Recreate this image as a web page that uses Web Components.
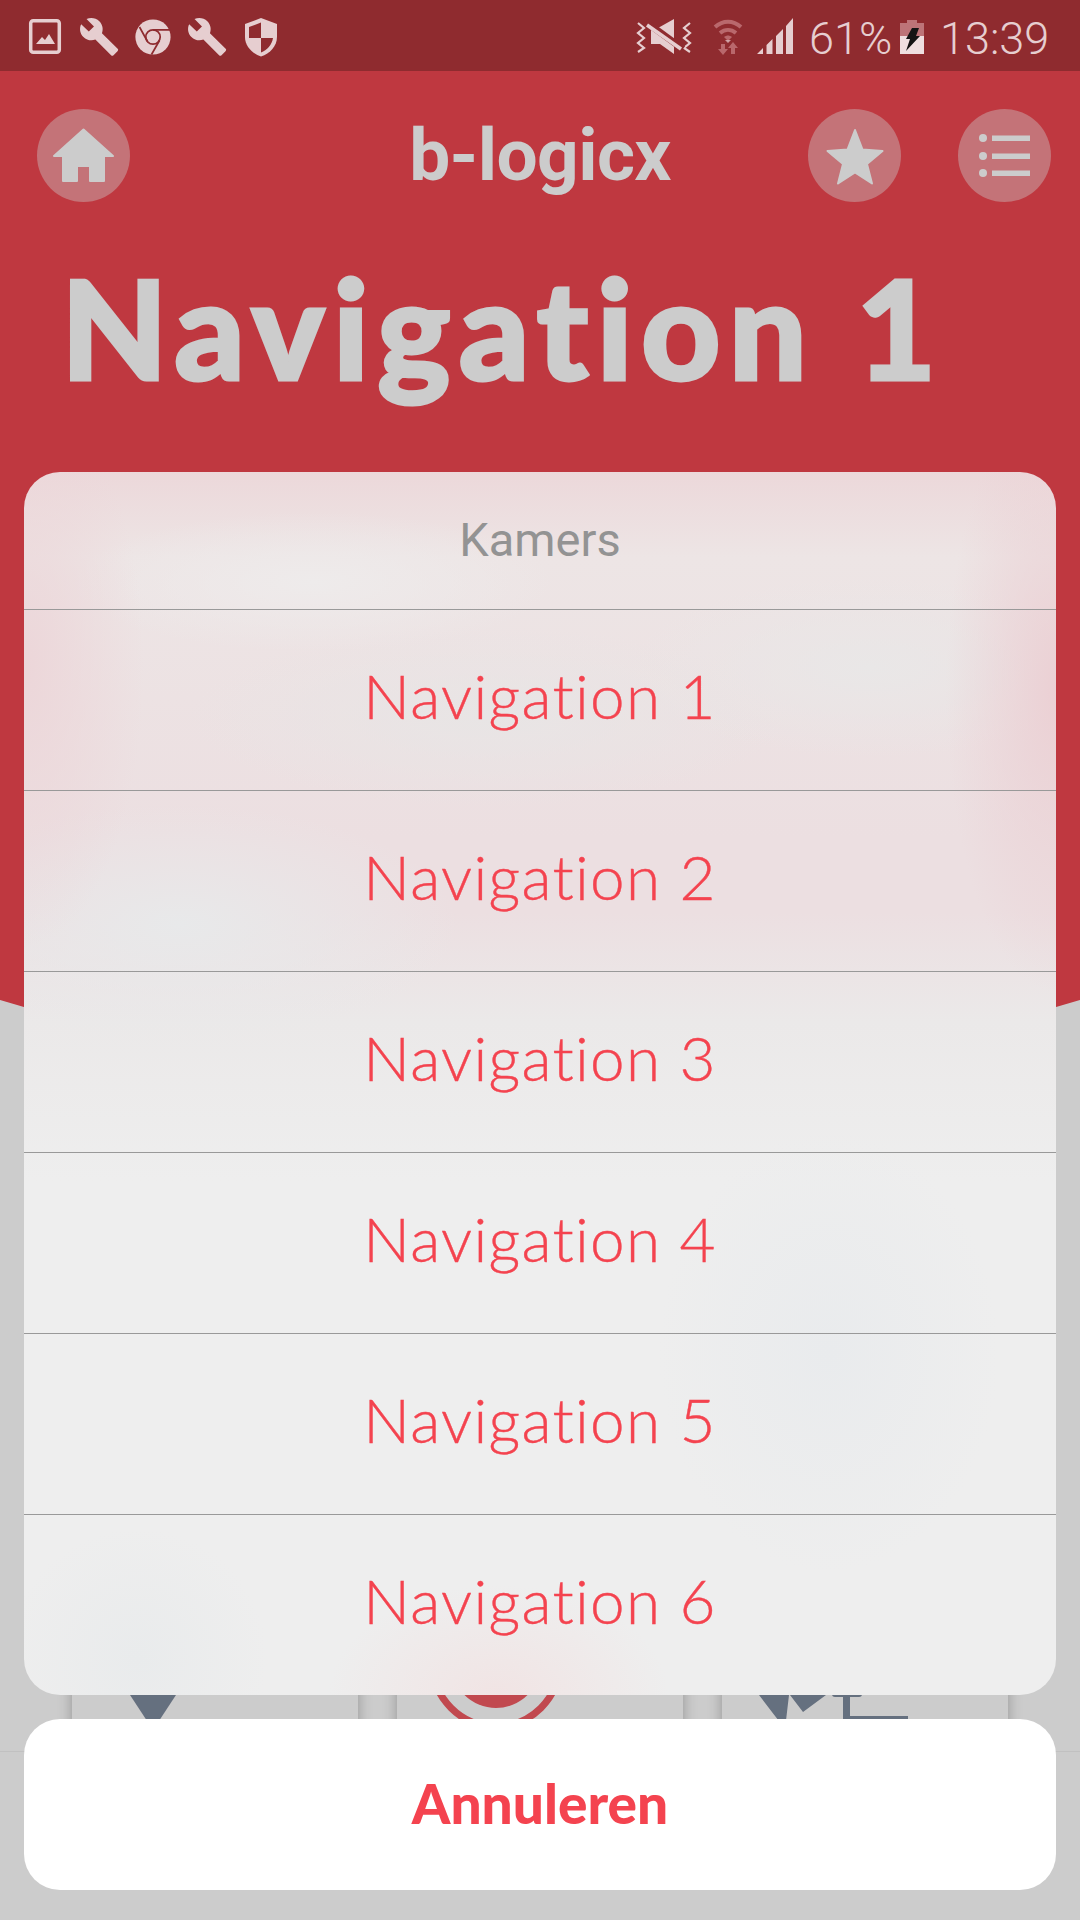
<!DOCTYPE html>
<html>
<head>
<meta charset="utf-8">
<title>b-logicx</title>
<style>
  html, body { margin: 0; padding: 0; }
  body { width: 1080px; height: 1920px; overflow: hidden; font-family: Roboto, sans-serif; }
</style>
</head>
<body>
<app-screen>
  <status-bar></status-bar>
  <hero-header title="Navigation 1" brand="b-logicx"></hero-header>
  <tile-row></tile-row>
  <tab-bar></tab-bar>
  <action-sheet slot="modal" heading="Kamers" cancel="Annuleren">
    <sheet-item>Navigation 1</sheet-item>
    <sheet-item>Navigation 2</sheet-item>
    <sheet-item>Navigation 3</sheet-item>
    <sheet-item>Navigation 4</sheet-item>
    <sheet-item>Navigation 5</sheet-item>
    <sheet-item>Navigation 6</sheet-item>
  </action-sheet>
</app-screen>

<script>
const WRENCH = "M22.7 19l-9.1-9.1c.9-2.3.4-5-1.5-6.9-2-2-5-2.4-7.4-1.3L9 6 6 9 1.6 4.7C.4 7.1.9 10.1 2.9 12.1c1.9 1.9 4.6 2.4 6.9 1.5l9.1 9.1c.4.4 1 .4 1.4 0l2.3-2.3c.5-.4.5-1.1.1-1.4z";

class AppScreen extends HTMLElement {
  constructor() {
    super();
    this.attachShadow({ mode: "open" });
    this.shadowRoot.innerHTML = `
      <style>
        :host {
          display: flex;
          flex-direction: column;
          position: relative;
          width: 1080px;
          height: 1920px;
          background: #fff;
          overflow: hidden;
        }
        .dim {
          position: absolute;
          inset: 71px 0 0 0;
          background: rgba(0, 0, 0, 0.2);
        }
      </style>
      <slot></slot>
      <div class="dim"></div>
      <slot name="modal"></slot>
    `;
  }
}

class StatusBar extends HTMLElement {
  constructor() {
    super();
    this.attachShadow({ mode: "open" });
    this.shadowRoot.innerHTML = `
      <style>
        :host {
          display: block;
          position: relative;
          z-index: 2;
          height: 71px;
          flex: none;
          background: #8f2b2f;
          color: #e6ced0;
          font: 300 45px Roboto, sans-serif;
        }
        svg { position: absolute; left: 0; top: 0; }
        span { position: absolute; top: 12px; line-height: 53px; white-space: nowrap; }
        .pct { left: 809px; }
        .time { left: 940px; }
      </style>
      <svg width="1080" height="71" viewBox="0 0 1080 71" fill="#e6ced0">
        <!-- picture notification -->
        <rect x="30.7" y="20.7" width="28.6" height="31.6" rx="2.5" fill="none" stroke="#e6ced0" stroke-width="3.5"/>
        <path d="M36 44l6-7 3 3 4-6 6 10z"/>
        <!-- wrench -->
        <path transform="translate(78.400 16) scale(1.73)" d="${WRENCH}"/>
        <!-- chrome -->
        <circle cx="153" cy="37" r="17.6"/>
        <g fill="none" stroke="#8f2b2f" stroke-width="1.7">
          <circle cx="153" cy="37" r="7.2"/>
          <path d="M139.5 27l8 14.5M153 29.8h17.5M151.5 54.5l8-14"/>
        </g>
        <!-- wrench -->
        <path transform="translate(186.400 16) scale(1.73)" d="${WRENCH}"/>
        <!-- shield -->
        <path d="M261 18l16 6v13c0 9-7 16.500-16 19.500c-9-3-16-10.500-16-19.500V24z"/>
        <path fill="#8f2b2f" d="M261 22.500l-12 4.500v11h12zM261 38h12c-1 7-6 12-12 14.500z"/>
        <!-- vibrate / muted -->
        <g fill="none" stroke="#e6ced0" stroke-width="2.2">
          <path d="M638 23l6 5-6 5 6 5-6 5 6 5-6 4M690 23l-6 5 6 5-6 5 6 5-6 5 6 4"/>
        </g>
        <path d="M651 28h7l16-9v35l-14-10h-9z"/>
        <path d="M645 23l37 27" stroke="#8f2b2f" stroke-width="7" transform="translate(1 -1)"/>
        <path d="M647 25l34 24" stroke="#e6ced0" stroke-width="3.6"/>
        <!-- wifi -->
        <g fill="none" stroke="#b9686c" stroke-width="4">
          <path d="M715 27c8-7 18-7 26 0"/>
          <path d="M720 33c5-4 11-4 16 0"/>
        </g>
        <path fill="#b9686c" d="M724 37c3-2 5-2 8 0l-4 4z"/>
        <path fill="#e6ced0" d="M725 40h6l-3 3z" opacity=".7"/>
        <path fill="#b9686c" d="M721 44h4v5h3l-5 6-5-6h3zM733 42l5 6h-3v6h-4v-6h-3z"/>
        <!-- signal -->
        <path d="M757 54l6-6v6zM766.500 45l6-6v15h-6zM776 36l7-7v25h-7zM786 26l7-8v36h-7z"/>
        <!-- battery -->
        <path fill="#bd7478" d="M907 20h10v3h7v13h-24V23h7z"/>
        <path fill="#efdfe0" d="M900 36h24v18h-24z"/>
        <path fill="#141414" d="M912 28h7l-3 8h4l-14 15 4-12h-4z"/>
      </svg>
      <span class="pct">61%</span>
      <span class="time">13:39</span>
    `;
  }
}

class RoundButton extends HTMLElement {
  constructor() {
    super();
    this.attachShadow({ mode: "open" });
    this.shadowRoot.innerHTML = `
      <style>
        :host {
          display: flex;
          align-items: center;
          justify-content: center;
          flex: none;
          width: 93px;
          height: 93px;
          border-radius: 50%;
          background: rgba(255, 255, 255, 0.4);
        }
        ::slotted(svg) { display: block; }
      </style>
      <slot></slot>
    `;
  }
}

class HeroHeader extends HTMLElement {
  constructor() {
    super();
    this.attachShadow({ mode: "open" });
    this.shadowRoot.innerHTML = `
      <style>
        :host {
          display: block;
          flex: none;
          height: 1009px;
          background: #ef4650;
          color: #fff;
          clip-path: circle(1860px at 540px -851px);
        }
        nav {
          display: grid;
          grid-template-columns: 1fr auto 1fr;
          align-items: center;
          padding: 38px 33px 0;
        }
        .left { margin-left: 4px; }
        .right { display: flex; justify-content: flex-end; gap: 57px; margin-right: -4px; }
        .brand {
          font: 700 73px/93px Roboto, sans-serif;
          letter-spacing: -0.6px;
        }
        h1 {
          margin: 45px 0 0 61px;
          font: 900 138px/160px Lato, sans-serif;
          font-variant-ligatures: none;
          letter-spacing: 8.2px;
          -webkit-text-stroke: 3px #fff;
          white-space: nowrap;
        }
      </style>
      <nav>
        <div class="left">
          <round-button>
            <svg width="62" height="56" viewBox="0 0 62 56" fill="#fff" stroke="#fff" stroke-width="2" stroke-linejoin="round">
              <path d="M30.500 1.500L60 28H51V53H37V38H24V53H10V28H1z"/>
            </svg>
          </round-button>
        </div>
        <div class="brand"></div>
        <div class="right">
          <round-button>
            <svg width="60" height="58" viewBox="0 0 60 58" fill="#fff" stroke="#fff" stroke-width="2" stroke-linejoin="round">
              <path d="M30 3l7.500 19.500 20 1.500-15.500 13 5 19.500L30 45.500 13 56.500 18 37 2.500 24l20-1.500z"/>
            </svg>
          </round-button>
          <round-button>
            <svg width="52" height="46" viewBox="0 0 52 46" fill="#fff">
              <circle cx="4" cy="5" r="4"/><circle cx="4" cy="23" r="4"/><circle cx="4" cy="40" r="4"/>
              <rect x="13" y="2.500" width="38" height="5.500"/><rect x="13" y="20.500" width="38" height="5.500"/><rect x="13" y="37.500" width="38" height="5.500"/>
            </svg>
          </round-button>
        </div>
      </nav>
      <h1></h1>
    `;
  }

  connectedCallback() {
    this.shadowRoot.querySelector(".brand").textContent = this.getAttribute("brand");
    this.shadowRoot.querySelector("h1").textContent = this.getAttribute("title");
  }
}

class TileRow extends HTMLElement {
  constructor() {
    super();
    this.attachShadow({ mode: "open" });
    this.shadowRoot.innerHTML = `
      <style>
        :host {
          display: flex;
          flex: 1;
          align-items: flex-end;
          justify-content: space-between;
          padding: 0 72px 0;
        }
        .tile {
          width: 286px;
          height: 190px;
          background: #fff;
          box-shadow: 0 0 13px rgba(0, 0, 0, 0.28);
        }
        svg { display: block; }
      </style>
      <div class="tile">
        <svg width="286" height="190" viewBox="0 0 286 190" fill="#7f8c9f">
          <path d="M58 145h46l-23 35z"/>
        </svg>
      </div>
      <div class="tile">
        <svg width="286" height="190" viewBox="0 0 286 190" fill="none">
          <circle cx="99" cy="113" r="63.500" stroke="#f25c63" stroke-width="7"/>
          <circle cx="99" cy="113" r="45" fill="#f25c63"/>
        </svg>
      </div>
      <div class="tile">
        <svg width="286" height="190" viewBox="0 0 286 190" fill="#7f8c9f">
          <path d="M37 145h30l-4 34zM68 145h36l-23 17z"/>
          <rect x="110" y="141" width="30" height="6" rx="3"/>
          <path d="M121 145h7v21h58v3h-65z"/>
        </svg>
      </div>
    `;
  }
}

class TabBar extends HTMLElement {
  constructor() {
    super();
    this.attachShadow({ mode: "open" });
    this.shadowRoot.innerHTML = `
      <style>
        :host {
          display: block;
          flex: none;
          height: 168px;
          border-top: 1px solid #f2f2f2;
          margin-top: 11px;
          background: #fff;
        }
      </style>
    `;
  }
}

class ActionSheet extends HTMLElement {
  constructor() {
    super();
    this.attachShadow({ mode: "open" });
    this.shadowRoot.innerHTML = `
      <style>
        :host {
          display: flex;
          flex-direction: column;
          gap: 24px;
          position: absolute;
          left: 24px;
          right: 24px;
          bottom: 30px;
          z-index: 3;
        }
        .group {
          border-radius: 36px;
          overflow: hidden;
          background:
            radial-gradient(130px 130px at 11% 97%, #e9ebec, rgba(233,235,236,0) 100%),
            radial-gradient(170px 110px at 46% 100%, #f1e4e4, rgba(241,228,228,0) 100%),
            radial-gradient(170px 220px at 78% 72%, #e9ebed, rgba(233,235,237,0) 100%),
            radial-gradient(120px 280px at 0% 16%, #ecd6d9, rgba(236,214,217,0) 100%),
            radial-gradient(110px 300px at 100% 18%, #ebd0d4, rgba(235,208,212,0) 100%),
            radial-gradient(280px 120px at 15% 37%, #e8e9ea, rgba(232,233,234,0) 100%),
            radial-gradient(300px 90px at 45% 20%, #e8e5e5, rgba(232,229,229,0) 100%),
            radial-gradient(240px 70px at 28% 9%, #eeebeb, rgba(238,235,235,0) 100%),
            radial-gradient(240px 90px at 82% 16%, #e9e7e7, rgba(233,231,231,0) 100%),
            linear-gradient(to bottom, #ecd8da 0, #ede5e5 7%, #ecdfe1 30%, #ecdfe1 36%, #ebe9e9 45%, #eeeeee 58%, #eeeeee 100%);
        }
        .head {
          height: 137px;
          display: flex;
          align-items: center;
          justify-content: center;
          color: #939393;
          font: 400 47px Roboto, sans-serif;
          padding-bottom: 3px;
          box-sizing: border-box;
        }
        .cancel {
          height: 171px;
          border-radius: 36px;
          background: #fff;
          display: flex;
          align-items: center;
          justify-content: center;
          color: #f4434f;
          font: 900 55px Lato, sans-serif;
          padding-bottom: 4px;
          box-sizing: border-box;
        }
      </style>
      <div class="group">
        <div class="head"></div>
        <slot></slot>
      </div>
      <div class="cancel"></div>
    `;
  }

  connectedCallback() {
    this.shadowRoot.querySelector(".head").textContent = this.getAttribute("heading");
    this.shadowRoot.querySelector(".cancel").textContent = this.getAttribute("cancel");
  }
}

class SheetItem extends HTMLElement {
  constructor() {
    super();
    this.attachShadow({ mode: "open" });
    this.shadowRoot.innerHTML = `
      <style>
        :host {
          display: flex;
          align-items: center;
          justify-content: center;
          box-sizing: border-box;
          height: 181px;
          padding-bottom: 10px;
          border-top: 1px solid #999;
          color: #f4434f;
          font: 300 62px Lato, sans-serif;
          font-variant-ligatures: none;
          letter-spacing: 1.3px;
          -webkit-text-stroke: 0.4px #f4434f;
        }
      </style>
      <slot></slot>
    `;
  }
}

customElements.define("app-screen", AppScreen);
customElements.define("status-bar", StatusBar);
customElements.define("round-button", RoundButton);
customElements.define("hero-header", HeroHeader);
customElements.define("tile-row", TileRow);
customElements.define("tab-bar", TabBar);
customElements.define("action-sheet", ActionSheet);
customElements.define("sheet-item", SheetItem);
</script>
</body>
</html>
